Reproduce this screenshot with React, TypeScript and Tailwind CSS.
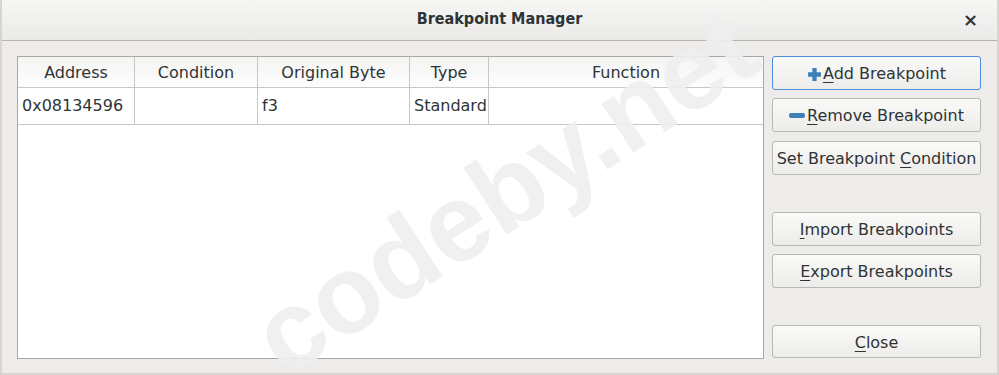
import { ReactNode } from "react";

const columns = [
  { label: "Address", width: "w-[117px]" },
  { label: "Condition", width: "w-[123px]" },
  { label: "Original Byte", width: "w-[152px]" },
  { label: "Type", width: "w-[79px]" },
  { label: "Function", width: "flex-1" },
];

const row = ["0x08134596", "", "f3", "Standard", ""];

// underline the mnemonic letter like GTK does
const Mnemonic = ({ children }: { children: string }) => (
  <span className="underline decoration-1 underline-offset-[3px]">{children}</span>
);

const DialogButton = ({
  children,
  focused,
  className,
}: {
  children: ReactNode;
  focused?: boolean;
  className?: string;
}) => (
  <button
    className={
      "w-full rounded-[3px] border bg-gradient-to-b from-[#fafaf9] to-[#edecea] text-[16px] text-[#2e3436] flex items-center justify-center pt-[2px] " +
      (focused ? "border-[#4a90d9] " : "border-[#b8b8b4] ") +
      (className ?? "")
    }
  >
    {children}
  </button>
);

const PlusIcon = () => (
  <svg width="15" height="15" viewBox="0 0 14 14" className="mr-[1px]">
    <path d="M5 1h4v4h4v4H9v4H5V9H1V5h4z" fill="#3f7fb8" />
  </svg>
);

const MinusIcon = () => (
  <svg width="16" height="6" viewBox="0 0 16 6" className="mr-[2px]">
    <rect x="0" y="0" width="16" height="5" rx="2" fill="#3f7fb8" />
  </svg>
);

export default function App() {
  return (
    <div
      className="relative w-[999px] h-[375px] overflow-hidden bg-[#edecea] border-x-2 border-b-2 border-[#d6d5d2] text-[#2e3436]"
      style={{ fontFamily: '"DejaVu Sans", sans-serif' }}
    >
      {/* title bar */}
      <div className="h-[41px] flex items-center justify-center relative bg-gradient-to-b from-[#f6f6f5] to-[#ebeae8] border-b border-[#b3b2ae]">
        <span
          className="text-[16px] font-bold text-[#2e3436] -mt-[3px]"
          style={{ fontFamily: '"DejaVu Sans Condensed", "DejaVu Sans", sans-serif' }}
        >
          Breakpoint Manager
        </span>
        <span className="absolute right-[19px] top-[6px] text-[18px] font-bold text-[#2e3436]">×</span>
      </div>

      <div className="flex pl-[15px] pr-[13px] pt-[15px] gap-[8px]">
        {/* table */}
        <div className="w-[747px] h-[303px] bg-white border border-[#a9a8a4] flex flex-col">
          <div className="flex h-[31px] bg-gradient-to-b from-[#f4f4f3] to-[#fdfdfd] border-b border-[#c8c7c4]">
            {columns.map((c, i) => (
              <div
                key={c.label}
                className={
                  c.width +
                  " flex items-center justify-center text-[16px] pt-[1px] " +
                  (i < columns.length - 1 ? "border-r border-[#c8c7c4]" : "")
                }
              >
                {c.label}
              </div>
            ))}
          </div>
          <div className="flex h-[37px] border-b border-[#c8c7c4]">
            {row.map((v, i) => (
              <div
                key={i}
                className={
                  columns[i].width +
                  " flex items-center px-[4px] text-[16px] " +
                  (i < row.length - 1 ? "border-r border-[#c8c7c4]" : "")
                }
              >
                {v}
              </div>
            ))}
          </div>
        </div>

        {/* buttons */}
        <div className="w-[209px] flex flex-col">
          <DialogButton focused className="h-[34px]">
            <PlusIcon />
            <span>
              <Mnemonic>A</Mnemonic>dd Breakpoint
            </span>
          </DialogButton>
          <DialogButton className="h-[34px] mt-[8px]">
            <MinusIcon />
            <span>
              <Mnemonic>R</Mnemonic>emove Breakpoint
            </span>
          </DialogButton>
          <DialogButton className="h-[34px] mt-[9px]">
            <span>
              Set Breakpoint <Mnemonic>C</Mnemonic>ondition
            </span>
          </DialogButton>
          <DialogButton className="h-[34px] mt-[37px]">
            <span>
              <Mnemonic>I</Mnemonic>mport Breakpoints
            </span>
          </DialogButton>
          <DialogButton className="h-[34px] mt-[8px]">
            <span>
              <Mnemonic>E</Mnemonic>xport Breakpoints
            </span>
          </DialogButton>
          <DialogButton className="h-[33px] mt-[37px]">
            <span>
              <Mnemonic>C</Mnemonic>lose
            </span>
          </DialogButton>
        </div>
      </div>

      {/* watermark, drawn over the dialog */}
      <div
        className="pointer-events-none absolute left-[216px] top-[108px] text-[110px] font-bold text-[#efefef] opacity-90 -rotate-[33deg] whitespace-nowrap"
        style={{ fontFamily: '"Liberation Sans", sans-serif' }}
      >
        codeby.net
      </div>
    </div>
  );
}
